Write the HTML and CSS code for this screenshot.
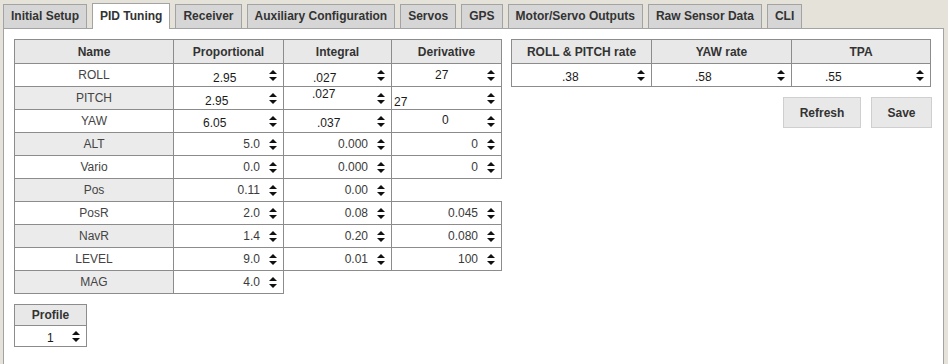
FILE: index.html
```html
<!DOCTYPE html>
<html>
<head>
<meta charset="utf-8">
<title>PID Tuning</title>
<link rel="stylesheet" href="styles.css">
</head>
<body>
<div class="tabs">
  <div class="tab">Initial Setup</div>
  <div class="tab active">PID Tuning</div>
  <div class="tab">Receiver</div>
  <div class="tab">Auxiliary Configuration</div>
  <div class="tab">Servos</div>
  <div class="tab">GPS</div>
  <div class="tab">Motor/Servo Outputs</div>
  <div class="tab">Raw Sensor Data</div>
  <div class="tab">CLI</div>
</div>
<div class="panel">
  <div class="main">
    <div class="left">
      <div class="grid pid">
        <div class="cell head">Name</div>
        <div class="cell head">Proportional</div>
        <div class="cell head">Integral</div>
        <div class="cell head">Derivative</div>

        <div class="cell name">ROLL</div>
        <div class="cell"><div class="inp"><span class="t l pl39 dn3">2.95</span><span class="spin"></span></div></div>
        <div class="cell"><div class="inp"><span class="t l pl29 dn3">.027</span><span class="spin"></span></div></div>
        <div class="cell"><div class="inp"><span class="t l pl43 dn0">27</span><span class="spin"></span></div></div>

        <div class="cell name alt">PITCH</div>
        <div class="cell"><div class="inp"><span class="t l pl31 dn3">2.95</span><span class="spin"></span></div></div>
        <div class="cell"><div class="inp"><span class="t l pl28 up4">.027</span><span class="spin"></span></div></div>
        <div class="cell"><div class="inp"><span class="t l pl2 dn4">27</span><span class="spin"></span></div></div>

        <div class="cell name">YAW</div>
        <div class="cell"><div class="inp"><span class="t l pl29 dn2">6.05</span><span class="spin"></span></div></div>
        <div class="cell"><div class="inp"><span class="t l pl33 dn2">.037</span><span class="spin"></span></div></div>
        <div class="cell"><div class="inp"><span class="t l pl50 up2">0</span><span class="spin"></span></div></div>

        <div class="cell name alt">ALT</div>
        <div class="cell"><div class="inp"><span class="t r">5.0</span><span class="spin"></span></div></div>
        <div class="cell"><div class="inp"><span class="t r">0.000</span><span class="spin"></span></div></div>
        <div class="cell"><div class="inp"><span class="t r">0</span><span class="spin"></span></div></div>

        <div class="cell name">Vario</div>
        <div class="cell"><div class="inp"><span class="t r">0.0</span><span class="spin"></span></div></div>
        <div class="cell"><div class="inp"><span class="t r">0.000</span><span class="spin"></span></div></div>
        <div class="cell"><div class="inp"><span class="t r">0</span><span class="spin"></span></div></div>

        <div class="cell name alt">Pos</div>
        <div class="cell"><div class="inp"><span class="t r">0.11</span><span class="spin"></span></div></div>
        <div class="cell"><div class="inp"><span class="t r">0.00</span><span class="spin"></span></div></div>
        <div class="blank under"></div>

        <div class="cell name">PosR</div>
        <div class="cell"><div class="inp"><span class="t r">2.0</span><span class="spin"></span></div></div>
        <div class="cell"><div class="inp"><span class="t r">0.08</span><span class="spin"></span></div></div>
        <div class="cell"><div class="inp"><span class="t r">0.045</span><span class="spin"></span></div></div>

        <div class="cell name alt">NavR</div>
        <div class="cell"><div class="inp"><span class="t r">1.4</span><span class="spin"></span></div></div>
        <div class="cell"><div class="inp"><span class="t r">0.20</span><span class="spin"></span></div></div>
        <div class="cell"><div class="inp"><span class="t r">0.080</span><span class="spin"></span></div></div>

        <div class="cell name">LEVEL</div>
        <div class="cell"><div class="inp"><span class="t r">9.0</span><span class="spin"></span></div></div>
        <div class="cell"><div class="inp"><span class="t r">0.01</span><span class="spin"></span></div></div>
        <div class="cell"><div class="inp"><span class="t r">100</span><span class="spin"></span></div></div>

        <div class="cell name alt">MAG</div>
        <div class="cell"><div class="inp"><span class="t r">4.0</span><span class="spin"></span></div></div>
        <div class="blank"></div>
        <div class="blank"></div>
      </div>

      <div class="grid profile">
        <div class="cell head">Profile</div>
        <div class="cell"><div class="inp"><span class="t l pl32 dn2">1</span><span class="spin"></span></div></div>
      </div>
    </div>

    <div class="right">
      <div class="grid rates">
        <div class="cell head">ROLL &amp; PITCH rate</div>
        <div class="cell head">YAW rate</div>
        <div class="cell head">TPA</div>
        <div class="cell"><div class="inp"><span class="t l pl50 dn2">.38</span><span class="spin"></span></div></div>
        <div class="cell"><div class="inp"><span class="t l pl43 dn2">.58</span><span class="spin"></span></div></div>
        <div class="cell"><div class="inp"><span class="t l pl33 dn2">.55</span><span class="spin"></span></div></div>
      </div>
      <div class="buttons">
        <button class="btn refresh">Refresh</button>
        <button class="btn save">Save</button>
      </div>
    </div>
  </div>
</div>
</body>
</html>
```

FILE: styles.css
```css
html, body {
  margin: 0;
  padding: 0;
}
body {
  background: #e4e2d9;
  font-family: "Liberation Sans", Arial, sans-serif;
  font-size: 12px;
  color: #333;
  overflow: hidden;
  height: 364px;
}

.tabs {
  display: flex;
  align-items: flex-end;
  gap: 5px;
  height: 28px;
  box-sizing: border-box;
  padding-left: 3px;
}
.tab {
  position: relative;
  height: 24px;
  box-sizing: border-box;
  padding: 0 7px;
  line-height: 23px;
  border: 1px solid #a3a3a3;
  border-bottom: none;
  background: #d6d6d6;
  font-weight: bold;
  color: #333;
  white-space: nowrap;
}
.tab.active {
  background: #fff;
  height: 26px;
  margin-bottom: -1px;
  line-height: 25px;
  z-index: 1;
}

.panel {
  margin-left: 3px;
  width: 941px;
  height: 400px;
  box-sizing: border-box;
  border: 1px solid #a3a3a3;
  background: #fff;
  padding: 10px 0 0 10px;
}

.main {
  display: flex;
  align-items: flex-start;
  gap: 9px;
}
.left {
  display: flex;
  flex-direction: column;
  gap: 10px;
}
.right {
  display: flex;
  flex-direction: column;
}

.grid {
  display: grid;
  border-top: 1px solid #8c8c8c;
  border-left: 1px solid #8c8c8c;
  width: max-content;
}
.pid {
  grid-template-columns: 159px 110px 108px 110px;
  grid-template-rows: 24px repeat(10, 23px);
}
.rates {
  grid-template-columns: 140px 140px 139px;
  grid-template-rows: 24px 23px;
}
.profile {
  grid-template-columns: 72px;
  grid-template-rows: 21px 21px;
}

.cell {
  box-sizing: border-box;
  border-right: 1px solid #8c8c8c;
  border-bottom: 1px solid #8c8c8c;
  background: #fff;
  min-width: 0;
}
.blank {
  background: transparent;
}
.blank.under {
  border-bottom: 1px solid #8c8c8c;
}
.head {
  background: #e8e8e8;
  font-weight: bold;
  color: #333;
  text-align: center;
  display: flex;
  align-items: center;
  justify-content: center;
}
.name {
  display: flex;
  align-items: center;
  justify-content: center;
  color: #444;
}
.name.alt {
  background: #ebebeb;
}

.inp {
  display: flex;
  align-items: center;
  height: 100%;
}
.t {
  flex: 1;
  line-height: 14px;
  white-space: nowrap;
}
.t.r {
  text-align: right;
  padding-right: 9px;
  color: #3a3a3a;
}
.t.l {
  text-align: left;
  color: #1a1a1a;
}

.pl2 { padding-left: 2px; }
.pl28 { padding-left: 28px; }
.pl29 { padding-left: 29px; }
.pl31 { padding-left: 31px; }
.pl32 { padding-left: 32px; }
.pl33 { padding-left: 33px; }
.pl39 { padding-left: 39px; }
.pl43 { padding-left: 43px; }
.pl50 { padding-left: 50px; }

.dn0 { margin-top: 0; }
.dn2 { margin-top: 4px; }
.dn3 { margin-top: 6px; }
.dn4 { margin-top: 8px; }
.up2 { margin-bottom: 3px; }
.up4 { margin-bottom: 9px; }

.spin {
  display: flex;
  flex-direction: column;
  gap: 3px;
  width: 8px;
  margin-right: 6px;
  flex: none;
}
.spin::before,
.spin::after {
  content: "";
  display: block;
  width: 0;
  height: 0;
  border-left: 4px solid transparent;
  border-right: 4px solid transparent;
}
.spin::before {
  border-bottom: 4px solid #111;
}
.spin::after {
  border-top: 4px solid #111;
}

.buttons {
  display: flex;
  justify-content: flex-end;
  gap: 10px;
  margin-top: 10px;
  margin-right: -1px;
}
.btn {
  height: 31px;
  box-sizing: border-box;
  border: 1px solid #cfcfcf;
  background: #e8e8e8;
  font-family: "Liberation Sans", Arial, sans-serif;
  font-size: 12px;
  font-weight: bold;
  color: #333;
  padding: 0;
}
.refresh { width: 78px; }
.save { width: 61px; }
```
